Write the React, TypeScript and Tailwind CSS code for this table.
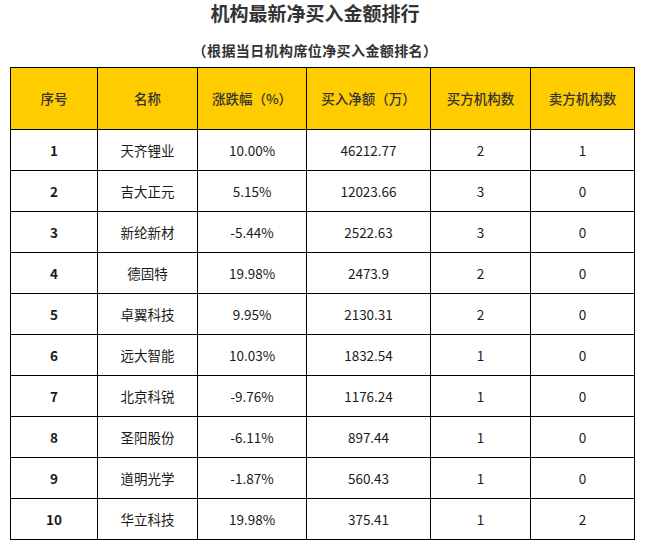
const rows = [
  { no: 1, name: "天齐锂业", pct: "10.00%", amount: "46212.77", buy: 2, sell: 1 },
  { no: 2, name: "吉大正元", pct: "5.15%", amount: "12023.66", buy: 3, sell: 0 },
  { no: 3, name: "新纶新材", pct: "-5.44%", amount: "2522.63", buy: 3, sell: 0 },
  { no: 4, name: "德固特", pct: "19.98%", amount: "2473.9", buy: 2, sell: 0 },
  { no: 5, name: "卓翼科技", pct: "9.95%", amount: "2130.31", buy: 2, sell: 0 },
  { no: 6, name: "远大智能", pct: "10.03%", amount: "1832.54", buy: 1, sell: 0 },
  { no: 7, name: "北京科锐", pct: "-9.76%", amount: "1176.24", buy: 1, sell: 0 },
  { no: 8, name: "圣阳股份", pct: "-6.11%", amount: "897.44", buy: 1, sell: 0 },
  { no: 9, name: "道明光学", pct: "-1.87%", amount: "560.43", buy: 1, sell: 0 },
  { no: 10, name: "华立科技", pct: "19.98%", amount: "375.41", buy: 1, sell: 2 },
]

const headers = ["序号", "名称", "涨跌幅（%）", "买入净额（万）", "买方机构数", "卖方机构数"]
const widths = ["w-[87px]", "w-[100px]", "w-[109px]", "w-[124px]", "w-[100px]", "w-[104px]"]

const font = "font-['Noto_Sans_CJK_SC',sans-serif]"

export default function App() {
  return (
    <div className={`w-[647px] h-[550px] bg-white ${font}`}>
      <div className="w-[630px] pt-px text-center text-[#333]">
        <h1 className="text-[19px] leading-[24px] font-bold">机构最新净买入金额排行</h1>
        <p className="mt-[16px] text-[14px] leading-[18px] font-bold tracking-[0.4px]">（根据当日机构席位净买入金额排名）</p>
      </div>

      <table className="ml-[10px] mt-[8px] w-[625px] table-fixed border-collapse text-center">
        <colgroup>
          {widths.map((w, i) => (
            <col key={i} className={w} />
          ))}
        </colgroup>
        <thead>
          <tr className="h-[62px] bg-[#ffcc00]">
            {headers.map((h) => (
              <th key={h} className="border border-black text-[13.5px] font-medium text-[#333]">
                {h}
              </th>
            ))}
          </tr>
        </thead>
        <tbody className="text-[13.5px] text-[#1a1a1a]">
          {rows.map((r) => (
            <tr key={r.no} className="h-[41px]">
              <td className="border border-black font-bold">{r.no}</td>
              <td className="border border-black">{r.name}</td>
              <td className="border border-black">{r.pct}</td>
              <td className="border border-black">{r.amount}</td>
              <td className="border border-black">{r.buy}</td>
              <td className="border border-black">{r.sell}</td>
            </tr>
          ))}
        </tbody>
      </table>
    </div>
  )
}
